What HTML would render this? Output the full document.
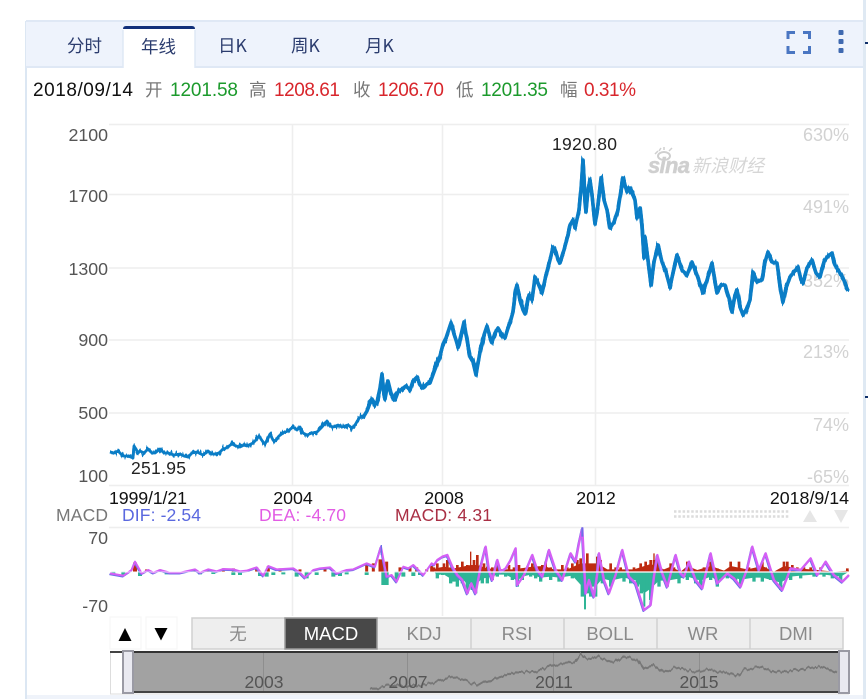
<!DOCTYPE html>
<html><head><meta charset="utf-8"><style>
html,body{margin:0;padding:0;background:#fff;width:868px;height:699px;overflow:hidden}
svg{display:block;font-family:"Liberation Sans","Noto Sans CJK SC",sans-serif}
.cj{font-family:"Noto Sans CJK SC","Liberation Sans",sans-serif}
</style></head><body>
<svg width="868" height="699" viewBox="0 0 868 699" xmlns="http://www.w3.org/2000/svg">
<defs>
<filter id="jag" filterUnits="userSpaceOnUse" x="100" y="130" width="765" height="350" color-interpolation-filters="sRGB">
<feTurbulence type="fractalNoise" baseFrequency="0.45 0.004" numOctaves="2" seed="4"/>
<feColorMatrix type="matrix" values="0 0 0 0 .5  0 1 0 0 0  0 0 0 0 .5  0 0 0 0 1" result="n"/>
<feDisplacementMap in="SourceGraphic" in2="n" scale="11" xChannelSelector="R" yChannelSelector="G"/>
</filter>
<filter id="jag2" filterUnits="userSpaceOnUse" x="360" y="645" width="490" height="50" color-interpolation-filters="sRGB">
<feTurbulence type="fractalNoise" baseFrequency="0.3 0.004" numOctaves="2" seed="7"/>
<feColorMatrix type="matrix" values="0 0 0 0 .5  0 1 0 0 0  0 0 0 0 .5  0 0 0 0 1" result="n"/>
<feDisplacementMap in="SourceGraphic" in2="n" scale="6" xChannelSelector="R" yChannelSelector="G"/>
</filter>
<filter id="soft" x="-5%" y="-20%" width="110%" height="140%"><feGaussianBlur stdDeviation="0.35"/></filter>
</defs>
<!-- panel -->
<rect x="863" y="0" width="3" height="699" fill="#dfe9f3"/>
<rect x="865" y="42" width="3" height="2" fill="#10306a"/>
<rect x="865" y="396" width="3" height="2" fill="#10306a"/>
<rect x="25" y="21" width="2" height="678" fill="#dce7f3"/>
<rect x="27" y="695" width="836" height="4" fill="#eff3fa"/>
<rect x="26" y="21" width="837" height="46" fill="#eef3fc"/>
<rect x="26" y="20" width="837" height="2" fill="#dfe8f5"/>
<rect x="26" y="66" width="837" height="2" fill="#dfe8f5"/>
<path d="M123 68V30Q123 27 126 27H192Q195 27 195 30V68Z" fill="#fff"/>
<path d="M123 68V30" stroke="#dfe8f5" stroke-width="1.5" fill="none"/>
<path d="M195 68V30" stroke="#dfe8f5" stroke-width="1.5" fill="none"/>
<path d="M123 29Q123 26 126 26H192Q195 26 195 29Z" fill="#12307a"/>
<g class="cj" font-size="17.5" fill="#2b3c6e">
<text x="67" y="52">分时</text>
<text x="141" y="53">年线</text>
<text x="218" y="52">日K</text>
<text x="291" y="52">周K</text>
<text x="365" y="52">月K</text>
</g>
<path d="M788 39V32.500H795M803 32.500H809.500V39M788 46V52.500H795M803 52.500H809.500V46" fill="none" stroke="#4a76c2" stroke-width="3"/>
<rect x="838.500" y="30" width="5" height="5" rx="1" fill="#3f69b0"/>
<rect x="838.500" y="39" width="5" height="5" rx="1" fill="#3f69b0"/>
<rect x="838.500" y="48" width="5" height="5" rx="1" fill="#3f69b0"/>
<!-- quote row -->
<g font-size="19">
<text x="33" y="96" fill="#111" textLength="100">2018/09/14</text>
<text class="cj" x="145" y="96" fill="#777" font-size="17.500">开</text>
<text x="170" y="96" fill="#1c9a2c" textLength="68">1201.58</text>
<text class="cj" x="249" y="96" fill="#777" font-size="17.500">高</text>
<text x="274" y="96" fill="#d8262c" textLength="66">1208.61</text>
<text class="cj" x="353" y="96" fill="#777" font-size="17.500">收</text>
<text x="378" y="96" fill="#d8262c" textLength="66">1206.70</text>
<text class="cj" x="456" y="96" fill="#777" font-size="17.500">低</text>
<text x="481" y="96" fill="#1c9a2c" textLength="67">1201.35</text>
<text class="cj" x="560" y="96" fill="#777" font-size="17.500">幅</text>
<text x="584" y="96" fill="#d8262c" textLength="52">0.31%</text>
</g>
<!-- grid -->
<g stroke="#eeeeee" stroke-width="1.500" fill="none">
<path d="M109 124.500H849M109 194.500H849M109 268H849M109 340H849M109 413H849M109 485.500H849M109 527.500H849"/>
<path d="M292.500 124V486M442.500 124V486M595.500 124V486M292.500 527V616M442.500 527V616M595.500 527V616"/>
</g>
<!-- right labels -->
<g font-size="18" fill="#d2d2d2" text-anchor="end">
<text x="849" y="141">630%</text><text x="849" y="213">491%</text><text x="849" y="287">352%</text>
<text x="849" y="358">213%</text><text x="849" y="431">74%</text><text x="849" y="483">-65%</text>
</g>
<!-- sina -->
<g fill="#cfcfcf">
<text x="648" y="173" font-size="22" font-weight="bold" font-style="italic" textLength="42" stroke="#cfcfcf" stroke-width=".5">sina</text>
<text class="cj" x="692" y="172" font-size="18" font-style="italic" fill="#d6d6d6">新浪财经</text>
<ellipse cx="664" cy="156" rx="6" ry="4" fill="none" stroke="#cfcfcf" stroke-width="2"/>
<path d="M655 154l3-3M659 151l2-3M664 150l0-3M669 151l3-3" stroke="#cfcfcf" stroke-width="1.500"/>
</g>
<!-- price line -->
<g fill="none" stroke="#0a7dc6" stroke-linejoin="round">
<polyline stroke-width="2.800" points="110,452 114,453 118,451 123,456 128,456 133,458 134,446 136,449 138,453 140,451 144,453 148,449 152,453 155,453 160,449 164,453 168,453 174,455 180,454 184,456 188,457 192,453 197,452 203,455 208,451 212,454 215,454 219,453 222,450 226,448 232,444 236,446 240,447 244,445 247,446 253,443 256,440 259,436 263,442 265,444 268,438 270,434 273,440 275,441 279,436 283,433 288,431 293,427 297,430 300,427 303,433 307,435 312,433 317,432 322,427 327,421 330,426 333,427 338,425 342,427 348,425 352,428 355,425 358,420 360,417"/>
<polyline stroke-width="3.600" points="360,417 364,416 367,411 370,403 372,399 375,404 377,402 380,388 382,374 384,395 385,399 387,384 388,381 391,393 395,400 398,392 402,389 406,386 410,390 413,381 417,377 420,385 423,388 427,384 430,383 434,372 437,364 440,356 443,344 446,338 451,323 454,334 456,340 458,347 461,335 464,322 467,340 470,357 473,362 476,375 480,352 484,335 487,326 490,337 492,342 495,333 498,328 502,335 505,338 508,328 510,323 513,312 515,295 517,285 520,300 523,310 525,314 529,295 532,300 535,277 538,283 542,293 546,275 550,260 553,247 556,252 558,260 560,263 564,250 568,235 570,225 573,220 575,228 579,210 581,190 583,160 584,178 585,200 586,212 588,190 590,180 592,195 595,224 598,205 601,178 604,200 607,210 610,228 614,222 618,210 621,190 623,178 627,192 630,188 635,200 637,218 640,208 642,225 644,258 645,237 648,260 651,285 654,262 658,245 662,262 666,272 670,287 674,268 677,255 682,270 687,275 692,262 697,275 703,293 707,280 712,263 715,282 717,293 721,285 725,285 729,298 732,312 735,295 737,290 740,307 743,315 747,308 750,300 753,272 757,282 762,280 765,262 768,252 772,262 777,263 780,285 783,302 786,288 790,277 794,272 798,267 801,280 803,283 807,268 812,260 816,273 820,277 824,262 827,257 832,253 835,265 838,270 843,278 848,291"/>
</g>
<g filter="url(#jag)" fill="none" stroke="#0a7dc6" stroke-linejoin="round">
<polyline stroke-width="2.800" points="110,452 114,453 118,451 123,456 128,456 133,458 134,446 136,449 138,453 140,451 144,453 148,449 152,453 155,453 160,449 164,453 168,453 174,455 180,454 184,456 188,457 192,453 197,452 203,455 208,451 212,454 215,454 219,453 222,450 226,448 232,444 236,446 240,447 244,445 247,446 253,443 256,440 259,436 263,442 265,444 268,438 270,434 273,440 275,441 279,436 283,433 288,431 293,427 297,430 300,427 303,433 307,435 312,433 317,432 322,427 327,421 330,426 333,427 338,425 342,427 348,425 352,428 355,425 358,420 360,417"/>
<polyline stroke-width="3.600" points="360,417 364,416 367,411 370,403 372,399 375,404 377,402 380,388 382,374 384,395 385,399 387,384 388,381 391,393 395,400 398,392 402,389 406,386 410,390 413,381 417,377 420,385 423,388 427,384 430,383 434,372 437,364 440,356 443,344 446,338 451,323 454,334 456,340 458,347 461,335 464,322 467,340 470,357 473,362 476,375 480,352 484,335 487,326 490,337 492,342 495,333 498,328 502,335 505,338 508,328 510,323 513,312 515,295 517,285 520,300 523,310 525,314 529,295 532,300 535,277 538,283 542,293 546,275 550,260 553,247 556,252 558,260 560,263 564,250 568,235 570,225 573,220 575,228 579,210 581,190 583,160 584,178 585,200 586,212 588,190 590,180 592,195 595,224 598,205 601,178 604,200 607,210 610,228 614,222 618,210 621,190 623,178 627,192 630,188 635,200 637,218 640,208 642,225 644,258 645,237 648,260 651,285 654,262 658,245 662,262 666,272 670,287 674,268 677,255 682,270 687,275 692,262 697,275 703,293 707,280 712,263 715,282 717,293 721,285 725,285 729,298 732,312 735,295 737,290 740,307 743,315 747,308 750,300 753,272 757,282 762,280 765,262 768,252 772,262 777,263 780,285 783,302 786,288 790,277 794,272 798,267 801,280 803,283 807,268 812,260 816,273 820,277 824,262 827,257 832,253 835,265 838,270 843,278 848,291"/>
</g>
<text x="552" y="150" font-size="17.500" fill="#222" textLength="65">1920.80</text>
<text x="131" y="474" font-size="17.500" fill="#222" textLength="55">251.95</text>
<!-- left labels -->
<g font-size="17.800" fill="#555" text-anchor="end">
<text x="108" y="141">2100</text><text x="108" y="202">1700</text><text x="108" y="275">1300</text>
<text x="108" y="346">900</text><text x="108" y="419">500</text><text x="108" y="482">100</text>
<text x="108" y="544">70</text><text x="108" y="612">-70</text>
</g>
<g font-size="17.800" fill="#111">
<text x="109" y="504" textLength="78">1999/1/21</text>
<text x="293" y="504" text-anchor="middle">2004</text>
<text x="444" y="504" text-anchor="middle">2008</text>
<text x="596" y="504" text-anchor="middle">2012</text>
<text x="849" y="504" text-anchor="end">2018/9/14</text>
</g>
<g font-size="17.500">
<text x="56" y="521" fill="#777" textLength="52">MACD</text>
<text x="122" y="521" fill="#5a68df" textLength="79">DIF: -2.54</text>
<text x="259" y="521" fill="#e25ce4" textLength="87">DEA: -4.70</text>
<text x="395" y="521" fill="#a92f44" textLength="97">MACD: 4.31</text>
</g>
<!-- dots -->
<path d="M674 511.500H790M674 516.500H790" stroke="#dcdcdc" stroke-width="2.500" stroke-dasharray="2.500 1.800" fill="none"/>
<path d="M803 522L810 510L817 522Z" fill="#e6e6e6"/>
<path d="M834 510H848L841 523Z" fill="#e6e6e6"/>
<!-- MACD chart in zoom coords: right part -->
<g transform="translate(434,480) scale(.33333)">
<path fill="#2fb596" d="M0 275L10 287L25 281L50 296L70 302L85 296L100 314L125 314L145 296L175 290L190 284L215 284L250 302L265 290L290 284L320 293L350 290L375 293L415 287L445 320L470 320L485 320L505 296L530 302L570 293L610 302L630 340L650 326L675 302L700 302L735 296L760 290L800 302L830 290L850 302L880 287L920 299L960 293L985 293L1040 308L1070 290L1100 287L1140 284L1170 284L1220 290L1245 275Z"/>
<path fill="none" stroke="#2fb596" stroke-width="10" d="M10 275V295M25 275V285M50 275V310M60 275V305M70 275V320M85 275V310M100 275V340M115 275V330M125 275V340M145 275V310M160 275V310M175 275V300M190 275V290M215 275V290M235 275V300M250 275V320M265 275V300M290 275V290M305 275V295M320 275V305M350 275V300M375 275V305M415 275V295M445 275V350M460 275V340M470 275V350M485 275V350M505 275V310M530 275V320M570 275V305M590 275V310M610 275V320M622 275V340M650 275V360M675 275V320M700 275V320M735 275V310M760 275V300M785 275V310M800 275V320M830 275V300M850 275V320M880 275V295M905 275V305M920 275V315M960 275V305M985 275V305M1010 275V300M1040 275V330M1070 275V300M1100 275V295M1140 275V290M1170 275V290M1195 275V295M1220 275V300"/>
<path fill="none" stroke="#2fb596" stroke-width="6" d="M453 275V388M631 275V380"/>
<path fill="#bd2a10" d="M0 275V267L30 260L60 265L110 255L130 255L160 265L200 268L240 268L295 260L330 258L360 268L400 268L440 250L490 250L520 268L600 268L650 252L690 268L710 260L740 275L760 258L790 270L830 258L870 272L890 258L940 268L985 258L1020 275L1050 258L1090 265L1130 268L1200 275L1245 272V275Z"/>
<path fill="none" stroke="#bd2a10" stroke-width="8" d="M0 275V262M10 275V250M20 275V262M30 275V250M40 275V240M50 275V262M70 275V255M85 275V245M100 275V255M120 275V240M130 275V225M140 275V255M150 275V250M160 275V260M175 275V262M190 275V255M205 275V268M225 275V255M240 275V262M255 275V255M265 275V265M280 275V260M295 275V250M325 275V255M335 275V245M350 275V262M385 275V255M400 275V262M415 275V250M430 275V240M440 275V235M460 275V220M470 275V262M490 275V230M500 275V240M515 275V268M530 275V250M545 275V262M560 275V262M580 275V268M600 275V262M620 275V250M635 275V245M650 275V240M660 275V240M670 275V240M680 275V262M695 275V268M710 275V250M720 275V262M760 275V245M770 275V262M810 275V262M820 275V262M830 275V245M840 275V262M850 275V265M890 275V245M900 275V262M915 275V245M930 275V268M945 275V262M970 275V262M985 275V245M995 275V262M1050 275V245M1060 275V245M1075 275V255M1090 275V262M1110 275V262M1130 275V262M1160 275V262M1240 275V265"/>
<path fill="none" stroke="#bd2a10" stroke-width="4" d="M110 275V215M660 275V220"/>
<g filter="url(#soft)">
<path fill="none" stroke="#6a70e8" stroke-width="6" stroke-linejoin="round" transform="translate(-2,3)" d="M0 255L10 240L25 230L40 225L55 260L70 285L85 300L100 340L112 310L125 340L140 260L155 200L165 270L175 300L190 240L200 275L215 265L230 240L245 205L250 315L270 285L295 225L310 270L325 290L345 210L365 270L385 300L410 220L425 245L435 190L445 145L455 340L465 300L480 350L490 280L495 220L510 300L525 340L545 285L565 210L585 290L605 310L630 390L650 375L660 290L670 225L685 280L700 320L725 225L740 280L750 290L765 245L785 300L805 325L830 220L850 310L880 280L900 295L920 320L940 265L955 200L975 270L995 220L1020 300L1045 330L1070 265L1100 270L1130 235L1150 285L1175 245L1200 285L1225 305L1245 285"/>
<path fill="none" stroke="#d45ff5" stroke-width="7" stroke-linejoin="round" d="M0 255L10 240L25 230L40 225L55 260L70 285L85 300L100 340L112 310L125 340L140 260L155 200L165 270L175 300L190 240L200 275L215 265L230 240L245 205L250 315L270 285L295 225L310 270L325 290L345 210L365 270L385 300L410 220L425 245L435 190L445 145L455 340L465 300L480 350L490 280L495 220L510 300L525 340L545 285L565 210L585 290L605 310L630 390L650 375L660 290L670 225L685 280L700 320L725 225L740 280L750 290L765 245L785 300L805 325L830 220L850 310L880 280L900 295L920 320L940 265L955 200L975 270L995 220L1020 300L1045 330L1070 265L1100 270L1130 235L1150 285L1175 245L1200 285L1225 305L1245 285"/>
</g>
<path fill="none" stroke="#6a70e8" stroke-width="6" d="M445 142V170"/>
<path d="M0 276H1245" stroke="#fff" stroke-width="4"/>
</g>
<!-- MACD left part -->
<g transform="translate(0,480) scale(.33333)">
<path fill="none" stroke="#2fb596" stroke-width="12" d="M340 275V285M370 275V288M420 275V288M500 275V283M600 275V283M640 275V282M700 275V285M720 275V285M780 275V288M800 275V290M820 275V285M850 275V283M890 275V290M920 275V295M950 275V285M1000 275V290M1020 275V288M1040 275V283M1100 275V285M1150 275V315M1160 275V315M1190 275V300M1210 275V290M1240 275V288M1260 275V285"/>
<path fill="none" stroke="#bd2a10" stroke-width="9" d="M440 275V268M480 275V268M585 275V268M625 275V268M670 275V265M700 275V265M770 275V262M805 275V258M840 275V265M900 275V268M975 275V265M1100 275V255M1120 275V250M1140 275V238M1147 275V238M1160 275V245M1200 275V262M1230 275V262M1250 275V262M1280 275V268M1295 275V258"/>
<path fill="none" stroke="#bd2a10" stroke-width="12" d="M405 275V248"/>
<g filter="url(#soft)">
<path fill="none" stroke="#6a70e8" stroke-width="5" stroke-linejoin="round" transform="translate(-2,3)" d="M330 280L370 287L395 270L405 245L425 280L445 270L460 278L480 270L510 278L540 278L585 268L600 278L625 268L650 274L670 267L700 268L720 274L740 272L770 262L790 287L805 258L830 268L880 265L900 278L915 293L940 270L960 265L990 262L1010 280L1040 270L1060 268L1100 250L1125 260L1143 200L1160 290L1175 285L1190 305L1210 260L1225 265L1240 255L1270 285L1295 250L1302 255"/>
<path fill="none" stroke="#d45ff5" stroke-width="6" stroke-linejoin="round" d="M330 280L370 287L395 270L405 245L425 280L445 270L460 278L480 270L510 278L540 278L585 268L600 278L625 268L650 274L670 267L700 268L720 274L740 272L770 262L790 287L805 258L830 268L880 265L900 278L915 293L940 270L960 265L990 262L1010 280L1040 270L1060 268L1100 250L1125 260L1143 200L1160 290L1175 285L1190 305L1210 260L1225 265L1240 255L1270 285L1295 250L1302 255"/>
</g>
<path fill="none" stroke="#6a70e8" stroke-width="4" d="M1144 195V225"/>
<path d="M328 276H1302" stroke="#fff" stroke-width="2.500"/>
</g>
<!-- up/down buttons -->
<rect x="110" y="617" width="31" height="32" fill="#fff" stroke="#f5f5f5"/>
<rect x="146" y="617" width="31" height="32" fill="#fff" stroke="#f5f5f5"/>
<path d="M118.500 641L125 628L131.500 641Z" fill="#000"/>
<path d="M154.500 628H167.500L161 640.500Z" fill="#000"/>
<!-- indicator tabs -->
<rect x="192" y="618" width="651" height="31" fill="#eeeeee" stroke="#d0d0d0" stroke-width="1.500"/>
<path d="M471 618V649M564 618V649M657 618V649M750 618V649" stroke="#d0d0d0" stroke-width="1.500"/>
<rect x="285" y="618" width="92" height="31" fill="#484848" stroke="#9a9a9a" stroke-width="1.500"/>
<g font-size="18.500" fill="#8a8a8a" text-anchor="middle">
<text class="cj" x="238" y="640" font-size="17.500">无</text>
<text x="331" y="640" fill="#fff">MACD</text>
<text x="424" y="640">KDJ</text>
<text x="517" y="640">RSI</text>
<text x="610" y="640">BOLL</text>
<text x="703" y="640">WR</text>
<text x="796" y="640">DMI</text>
</g>
<!-- navigator -->
<rect x="110.500" y="652" width="738" height="42" fill="#fff" stroke="#dddddd"/>
<rect x="110" y="651" width="14" height="2" fill="#444"/>
<rect x="133" y="652" width="705" height="41" fill="#a2a2a2"/>
<rect x="133" y="651" width="705" height="2" fill="#333"/>
<rect x="133" y="691" width="705" height="2" fill="#444"/>
<path d="M263.500 653V691M407.500 653V691M553.500 653V691M699.500 653V691" stroke="#8e8e8e" stroke-width="1"/>
<polyline filter="url(#jag2)" fill="none" stroke="#777" stroke-width="2" points="370,690 378,688 387,685 400,686 420,686 434,683 451,677 461,679 477,685 497,678 517,672 534,672 554,665 574,662 581,654 586,658 591,658 597,656 614,663 624,656 637,660 644,670 654,665 664,672 674,668 697,672 704,670 727,673 737,676 744,670 761,667 774,673 801,669 821,667 837,672"/>
<g font-size="17.500" fill="#555" text-anchor="middle">
<text x="264" y="688">2003</text><text x="408" y="688">2007</text><text x="554" y="688">2011</text><text x="699" y="688">2015</text>
</g>
<rect x="123" y="651" width="10" height="42" fill="#e9e9f0" stroke="#9a9aa4" stroke-width="2"/>
<rect x="839" y="651" width="10" height="42" fill="#e9e9f0" stroke="#9a9aa4" stroke-width="2"/>
</svg>
</body></html>
